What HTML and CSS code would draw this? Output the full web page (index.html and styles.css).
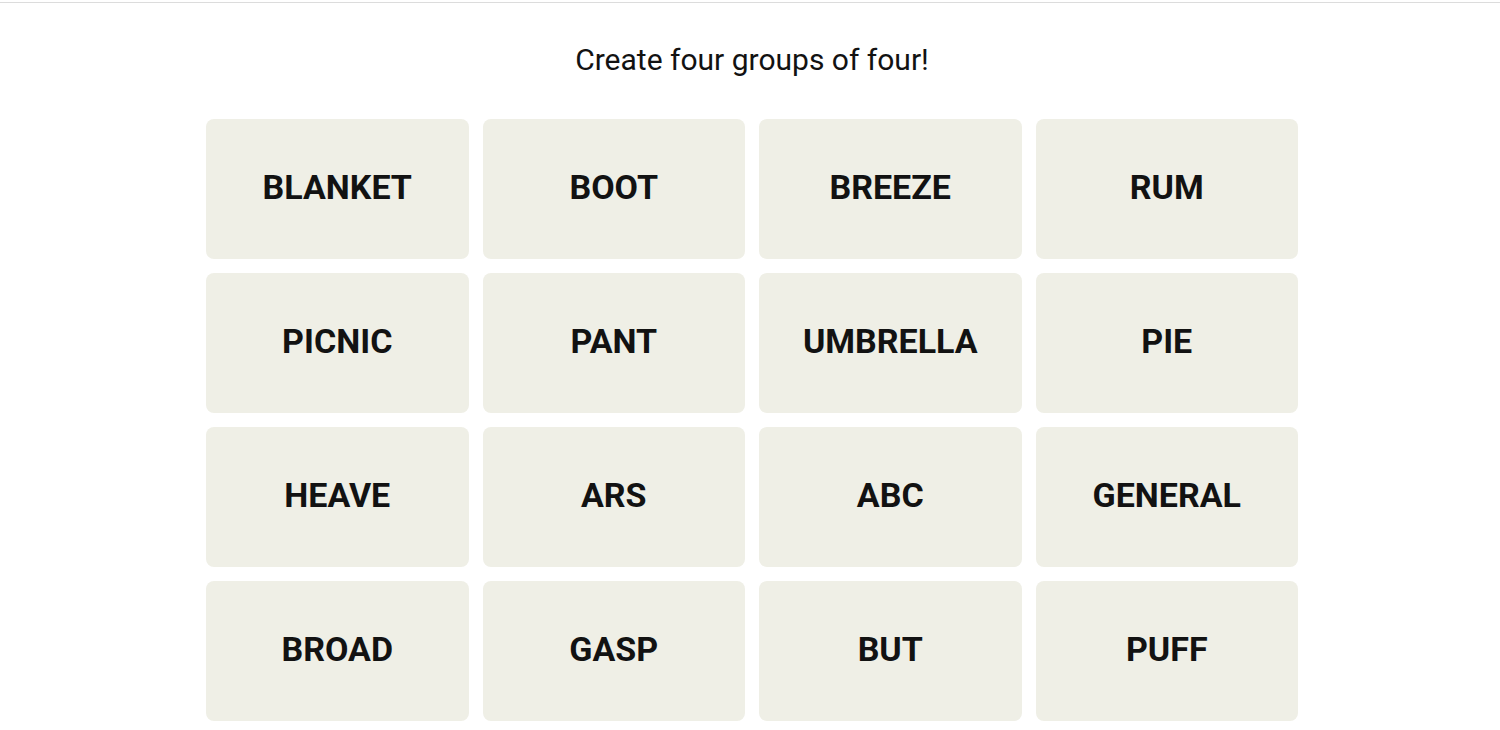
FILE: index.html
```
<!DOCTYPE html>
<html lang="en">
<head>
  <meta charset="UTF-8" />
  <meta name="viewport" content="width=device-width, initial-scale=1.0"/>
  <title>Connections</title>
  <link rel="stylesheet" href="styles.css">
</head>
<body>

  <div class="top-rule"></div>

  <main class="game">
    <h2 class="prompt">Create four groups of four!</h2>

    <div class="board">
      <button class="tile">BLANKET</button>
      <button class="tile">BOOT</button>
      <button class="tile">BREEZE</button>
      <button class="tile">RUM</button>

      <button class="tile">PICNIC</button>
      <button class="tile">PANT</button>
      <button class="tile">UMBRELLA</button>
      <button class="tile">PIE</button>

      <button class="tile">HEAVE</button>
      <button class="tile">ARS</button>
      <button class="tile">ABC</button>
      <button class="tile">GENERAL</button>

      <button class="tile">BROAD</button>
      <button class="tile">GASP</button>
      <button class="tile">BUT</button>
      <button class="tile">PUFF</button>
    </div>
  </main>

</body>
</html>
```

FILE: styles.css
```
* {
  margin: 0; padding: 0; box-sizing: border-box;
  font-family: Roboto, 'Liberation Sans', sans-serif;
}
body {
  background: #fff;
  color: #121212;
  overflow: hidden;
}
.top-rule {
  margin-top: 2px;
  border-top: 1px solid #dcdcdc;
}
.game {
  padding-left: 4px;
}
.prompt {
  text-align: center;
  font-size: 30px;
  font-weight: 400;
  line-height: 36px;
  margin-top: 39px;
}
.board {
  width: 1092px;
  margin: 41px auto 0;
  display: grid;
  grid-template-columns: repeat(4, 1fr);
  gap: 14px;
}
.tile {
  height: 140px;
  padding-bottom: 5px;
  background: #efefe6;
  border: none;
  border-radius: 8px;
  color: #121212;
  font-size: 34px;
  font-weight: 700;
  cursor: pointer;
}
```
